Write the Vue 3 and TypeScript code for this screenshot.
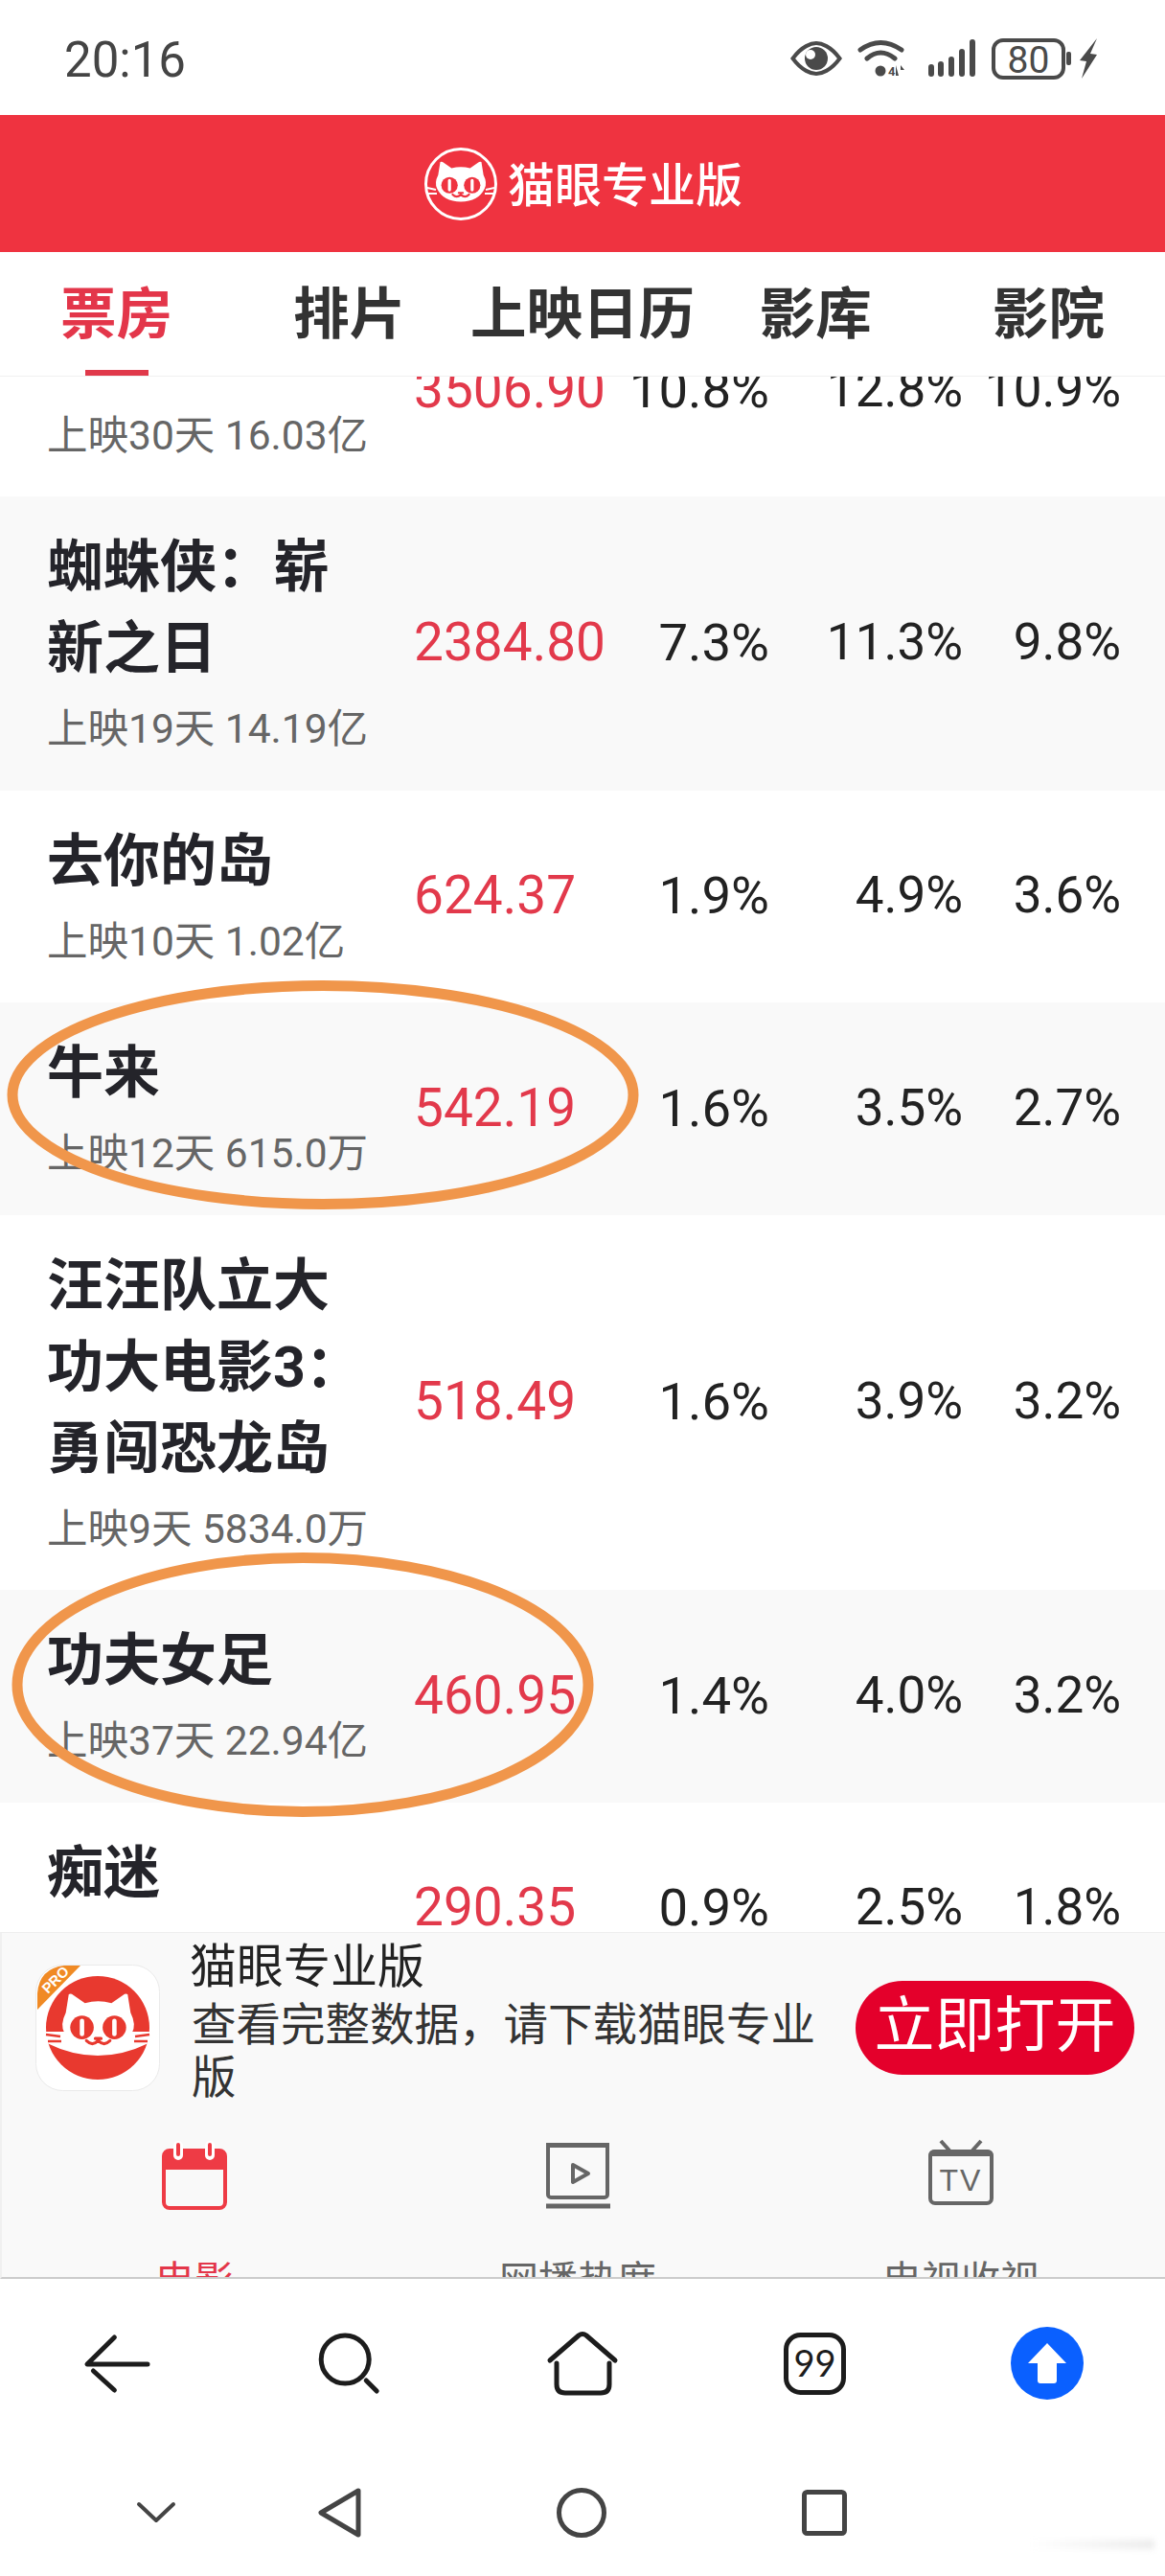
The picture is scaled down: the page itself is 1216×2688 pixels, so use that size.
<template>
  <div class="page">
    <svg class="defs" width="0" height="0">
      <symbol id="cat" viewBox="-4 0 108 84">
        <path fill="#fff" d="M10 3 Q13 1 16 4 L32 15 Q50 10 68 15 L84 4 Q87 1 90 3 Q93 22 94 28 Q102 44 96 55 Q84 80 50 80 Q16 80 4 55 Q-2 44 6 28 Q7 22 10 3Z" />
        <circle cx="28" cy="48" r="16" fill="currentColor" />
        <circle cx="72" cy="48" r="16" fill="currentColor" />
        <rect x="25" y="36" width="6" height="24" rx="3" fill="#fff" />
        <rect x="69" y="36" width="6" height="24" rx="3" fill="#fff" />
        <path fill="none" stroke="currentColor" stroke-width="4" stroke-linecap="round" d="M34 66 Q42 74 50 66 Q58 74 66 66 M46 63 H54" />
      </symbol>
    </svg>

    <div class="status">
      <span class="time">20:16</span>
      <div class="status-icons">
        <svg width="54" height="36" viewBox="0 0 54 36">
          <path fill="none" stroke="#4a4a4a" stroke-width="4" d="M2.500 18 C12 5 22 2 27 2 C32 2 42 5 51.500 18 C42 31 32 34 27 34 C22 34 12 31 2.500 18Z" />
          <circle cx="27" cy="18" r="12" fill="#4a4a4a" />
          <circle cx="21" cy="14" r="5" fill="#fff" />
        </svg>
        <svg class="ml16" width="50" height="40" viewBox="0 0 50 40">
          <path fill="none" stroke="#4a4a4a" stroke-width="5" stroke-linecap="round" d="M3 11 Q24 -4 46 11 M10 20 Q24 8 39 20" />
          <circle cx="24" cy="33" r="5.500" fill="#4a4a4a" />
          <text x="32" y="38" class="wifi-4">4</text>
          <path fill="#4a4a4a" d="M40 27 L43 38 H40Z M45 27 L49 32 H45Z" />
        </svg>
        <svg class="ml24" width="50" height="40" viewBox="0 0 50 40">
          <path fill="none" stroke="#4a4a4a" stroke-width="6" stroke-linecap="round" d="M3 29 V36 M13 26 V36 M24 21 V36 M35 13 V36 M46 3 V36" />
        </svg>
        <svg class="ml16" width="85" height="44" viewBox="0 0 85 44">
          <rect x="2" y="3" width="73" height="39" rx="10" fill="none" stroke="#4a4a4a" stroke-width="4" />
          <text x="38.500" y="37" text-anchor="middle" class="batt">80</text>
          <rect x="78" y="15" width="5" height="14" rx="2" fill="#4a4a4a" />
        </svg>
        <svg class="ml7" width="18" height="42" viewBox="0 0 18 42">
          <path fill="#4a4a4a" d="M18 0 L0 23 L7 24 L2 42 L18 17 L11 16Z" />
        </svg>
      </div>
    </div>

    <div class="header">
      <svg width="80" height="80" viewBox="0 0 80 80" color="#ef3340">
        <circle cx="40" cy="40" r="36.500" fill="none" stroke="#fff" stroke-width="3" />
        <use href="#cat" x="11" y="15" width="58" height="46" />
        <path fill="none" stroke="#fff" stroke-width="2" d="M5 44 L14 46 M6 50 L15 50 M75 44 L66 46 M74 50 L65 50" />
      </svg>
      <span class="header-text">猫眼专业版</span>
    </div>

    <div class="tabs">
      <div v-for="(t, i) in tabs" :key="t" class="tab" :class="{ on: i === 0 }">{{ t }}</div>
      <i class="tab-line"></i>
    </div>

    <div class="list">
      <div v-for="(m, i) in movies" :key="i" class="row">
        <div class="info">
          <div class="name">{{ m.name }}</div>
          <div class="sub">{{ m.sub }}</div>
        </div>
        <div class="box">{{ m.box }}</div>
        <div class="pct">{{ m.a }}</div>
        <div class="pct">{{ m.b }}</div>
        <div class="pct">{{ m.c }}</div>
      </div>
    </div>

    <div class="banner">
      <div class="app">
        <svg class="app-icon" width="130" height="132" viewBox="0 0 130 132" color="#e8392f">
          <rect x="0.500" y="0.500" width="129" height="131" rx="28" fill="#fff" stroke="#eaeaea" />
          <path fill="#f08a24" d="M2 30 Q4 4 30 1 H47 L2 47Z" />
          <text class="pro" transform="translate(13 31) rotate(-45)">PRO</text>
          <circle cx="65" cy="66" r="54" fill="currentColor" />
          <path fill="#fff" d="M10 70 L120 70 L118 82 Q65 108 12 82Z" />
          <use href="#cat" x="24" y="28" width="83" height="66" />
          <path fill="none" stroke="currentColor" stroke-width="2.500" d="M11 73 L26 75 M13 80 L27 80 M119 73 L104 75 M117 80 L103 80" />
        </svg>
        <div class="app-text">
          <div class="app-name">猫眼专业版</div>
          <div class="app-desc">{{ desc }}</div>
        </div>
        <div class="open-btn">立即打开</div>
      </div>
      <div class="nav">
        <div class="nav-item on">
          <svg width="80" height="80" viewBox="0 0 80 80">
            <rect x="8" y="14" width="64" height="60" rx="6" fill="none" stroke="#ee3b45" stroke-width="4" />
            <path fill="#ee3b45" d="M8 34 V18 Q8 13 14 13 H66 Q72 13 72 18 V34Z" />
            <path fill="none" stroke="#fff" stroke-width="10" stroke-linecap="round" d="M23 9 V19 M56 9 V19" />
            <path fill="none" stroke="#ee3b45" stroke-width="4" stroke-linecap="round" d="M23 8 V18 M56 8 V18" />
          </svg>
          <span>电影</span>
        </div>
        <div class="nav-item">
          <svg width="80" height="80" viewBox="0 0 80 80">
            <rect x="9" y="8" width="62" height="55" rx="3" fill="none" stroke="#666" stroke-width="4" />
            <path fill="#666" d="M7 6 H73 V11 H7Z" />
            <path fill="none" stroke="#666" stroke-width="4" stroke-linejoin="round" d="M35 29 L51 38 L35 47Z" />
            <path fill="none" stroke="#666" stroke-width="5" d="M7 72 H74" />
          </svg>
          <span>网播热度</span>
        </div>
        <div class="nav-item">
          <svg width="80" height="80" viewBox="0 0 80 80">
            <rect x="8" y="15" width="64" height="54" rx="5" fill="none" stroke="#666" stroke-width="4" />
            <path fill="#666" d="M6 20 Q6 13 13 13 H67 Q74 13 74 20Z" />
            <path fill="none" stroke="#666" stroke-width="4" d="M19 4 L28 14 M61 4 L52 14" />
            <text x="40" y="56" text-anchor="middle" class="tv">TV</text>
          </svg>
          <span>电视收视</span>
        </div>
      </div>
    </div>

    <div class="browser">
      <div class="tools">
        <svg width="80" height="80" viewBox="0 0 80 80">
          <path fill="none" stroke="#1c1c1c" stroke-width="5" stroke-linecap="round" stroke-linejoin="round" d="M37.400 13 L9 41 H72 M15.400 48 L37.400 68" />
        </svg>
        <svg width="80" height="80" viewBox="0 0 80 80">
          <circle cx="35.200" cy="36" r="25" fill="none" stroke="#1c1c1c" stroke-width="5" />
          <path fill="none" stroke="#1c1c1c" stroke-width="5" stroke-linecap="round" d="M57.200 58 L68.200 69" />
        </svg>
        <svg width="80" height="80" viewBox="0 0 80 80">
          <path fill="none" stroke="#1c1c1c" stroke-width="5" stroke-linecap="round" stroke-linejoin="round" d="M6 37 L36 11 Q40 8 44 11 L74 37" />
          <path fill="none" stroke="#1c1c1c" stroke-width="5" stroke-linecap="round" d="M13 40 V62 Q13 71 22 71 H59 Q68 71 68 62 V40" />
        </svg>
        <svg width="80" height="80" viewBox="0 0 80 80">
          <rect x="9.500" y="10.500" width="60" height="60" rx="15" fill="none" stroke="#1c1c1c" stroke-width="5" />
          <text x="39.500" y="54" text-anchor="middle" class="tabs-count">99</text>
        </svg>
        <svg width="80" height="80" viewBox="0 0 80 80">
          <circle cx="39" cy="40" r="38" fill="#0a60ff" />
          <path fill="#fff" d="M39 19 L59 40 H49 V58 Q49 61 46 61 H32 Q29 61 29 58 V40 H19Z" />
        </svg>
      </div>
      <div class="sysnav">
        <svg width="64" height="60" viewBox="0 0 64 60">
          <path fill="none" stroke="#444" stroke-width="4" stroke-linecap="round" stroke-linejoin="round" d="M14 21 L32 38 L50 21" />
        </svg>
        <svg width="64" height="60" viewBox="0 0 64 60">
          <path fill="none" stroke="#444" stroke-width="5" stroke-linejoin="round" d="M51 7 L12 30 L51 53Z" />
        </svg>
        <svg width="64" height="60" viewBox="0 0 64 60">
          <circle cx="32" cy="30" r="23.500" fill="none" stroke="#444" stroke-width="5" />
        </svg>
        <svg width="64" height="60" viewBox="0 0 64 60">
          <rect x="11.500" y="8.500" width="42" height="43" rx="3" fill="none" stroke="#444" stroke-width="5" />
        </svg>
      </div>
      <i class="smudge"></i>
    </div>

    <svg class="marks" width="1216" height="2688" viewBox="0 0 1216 2688">
      <ellipse cx="337" cy="1142.500" rx="324" ry="114" />
      <ellipse cx="316" cy="1758" rx="298" ry="132.500" />
    </svg>
  </div>
</template>

<script setup lang="ts">
interface Movie {
  name: string
  sub: string
  box: string
  a: string
  b: string
  c: string
}

const tabs = ['票房', '排片', '上映日历', '影库', '影院']

const desc = '查看完整数据\uFF0C请下载猫眼专业版'

const movies: Movie[] = [
  { name: '热片', sub: '上映30天 16.03亿', box: '3506.90', a: '10.8%', b: '12.8%', c: '10.9%' },
  { name: '蜘蛛侠\uFF1A崭新之日', sub: '上映19天 14.19亿', box: '2384.80', a: '7.3%', b: '11.3%', c: '9.8%' },
  { name: '去你的岛', sub: '上映10天 1.02亿', box: '624.37', a: '1.9%', b: '4.9%', c: '3.6%' },
  { name: '牛来', sub: '上映12天 615.0万', box: '542.19', a: '1.6%', b: '3.5%', c: '2.7%' },
  { name: '汪汪队立大功大电影3\uFF1A勇闯恐龙岛', sub: '上映9天 5834.0万', box: '518.49', a: '1.6%', b: '3.9%', c: '3.2%' },
  { name: '功夫女足', sub: '上映37天 22.94亿', box: '460.95', a: '1.4%', b: '4.0%', c: '3.2%' },
  { name: '痴迷', sub: '上映5天 1200.0万', box: '290.35', a: '0.9%', b: '2.5%', c: '1.8%' },
]
</script>

<style>
html,
body {
  margin: 0;
  background: #fff;
}
</style>

<style scoped>
.page {
  position: relative;
  width: 1216px;
  height: 2688px;
  display: flex;
  flex-direction: column;
  overflow: hidden;
  background: #fff;
  font-family: Roboto, "Noto Sans CJK SC", sans-serif;
}

.defs {
  position: absolute;
}

.status {
  height: 120px;
  flex: none;
  display: flex;
  align-items: center;
  justify-content: space-between;
  box-sizing: border-box;
  padding: 4px 71px 0 67px;
}

.time {
  font-size: 51px;
  color: #444;
}

.status-icons {
  display: flex;
  align-items: center;
  margin-top: -2px;
}

.ml7 {
  margin-left: 7px;
}

.ml16 {
  margin-left: 16px;
}

.ml24 {
  margin-left: 24px;
}

.wifi-4 {
  font-size: 13px;
  font-weight: 700;
  fill: #4a4a4a;
}

.batt {
  font-size: 39px;
  fill: #4a4a4a;
}

.header {
  height: 143px;
  flex: none;
  background: #ef3340;
  display: flex;
  align-items: center;
  justify-content: center;
  gap: 9px;
}

.header-text {
  font-size: 49px;
  font-weight: 500;
  color: #fff;
  margin-top: -4px;
}

.tabs {
  position: relative;
  z-index: 1;
  height: 130px;
  flex: none;
  display: flex;
  box-sizing: border-box;
  padding-bottom: 11px;
  background: #fff;
  border-bottom: 1px solid #f0f0f0;
}

.tab {
  flex: 1;
  display: flex;
  align-items: center;
  justify-content: center;
  font-size: 58.500px;
  font-weight: 700;
  color: #333;
  white-space: nowrap;
}

.tab.on {
  color: #e3364a;
}

.tab-line {
  position: absolute;
  left: 89px;
  bottom: 0;
  width: 66px;
  height: 6px;
  background: #e0394a;
}

.list {
  flex: 1;
  min-height: 0;
  overflow: hidden;
}

.row {
  display: grid;
  grid-template-columns: 382px 210px 161px 202px 165px;
  align-items: center;
  padding: 0 46px 0 50px;
}

.row:first-child {
  margin-top: -96.500px;
}

.row:first-child .name {
  margin: -5px 0 5px;
}

.row:nth-child(even) {
  background: #f9f9f9;
}

.info {
  margin-left: -1px;
  padding: 31px 0 22.500px;
}

.name {
  width: 345px;
  font-size: 59px;
  line-height: 85px;
  font-weight: 700;
  color: #24242a;
}

.sub {
  font-size: 42.500px;
  line-height: 83px;
  color: #666;
  white-space: nowrap;
}

.box {
  font-size: 55px;
  color: #e2394b;
  margin-top: -2px;
}

.pct {
  font-size: 53px;
  color: #222;
  text-align: right;
  margin-top: -2px;
}

.box + .pct {
  font-size: 54.500px;
}

.banner {
  position: relative;
  height: 362px;
  flex: none;
  box-sizing: border-box;
  overflow: hidden;
  background: #f9f9f9;
  border-top: 1px solid #eee;
  border-left: 2px solid #f0f0f0;
  border-bottom: 2px solid #ccc;
}

.app {
  display: flex;
  align-items: flex-start;
  padding: 8px 32px 0 35px;
  height: 172px;
}

.app-icon {
  flex: none;
  margin-top: 25px;
}

.app-text {
  width: 672px;
  margin-left: 33px;
  flex: none;
}

.app-name {
  font-size: 49px;
  line-height: 56px;
  color: #222;
  margin-left: -2px;
}

.app-desc {
  font-size: 46.500px;
  line-height: 55px;
  color: #333;
  margin-top: 5px;
}

.open-btn {
  margin: 42px 0 0 auto;
  width: 291px;
  height: 98px;
  border-radius: 49px;
  background: #e4002b;
  color: #fff;
  font-size: 63px;
  line-height: 94px;
  text-align: center;
  white-space: nowrap;
}

.nav {
  display: grid;
  grid-template-columns: repeat(3, 400px);
  padding: 33px 0 0 1px;
}

.nav-item {
  display: flex;
  flex-direction: column;
  align-items: center;
  gap: 42px;
  font-size: 41px;
  line-height: 56px;
  color: #666;
}

.nav-item.on {
  color: #e3364a;
}

.browser {
  position: relative;
  height: 310px;
  flex: none;
  background: #fff;
}

.tools {
  height: 176px;
  display: grid;
  grid-template-columns: repeat(5, 1fr);
  align-items: center;
  justify-items: center;
}

.tabs-count {
  font-family: Lato, sans-serif;
  font-size: 38px;
  fill: #1c1c1c;
}

.sysnav {
  display: grid;
  grid-template-columns: 192px 252px 253px 64px;
  padding: 38px 0 0 131px;
}

.smudge {
  position: absolute;
  left: 1075px;
  top: 272px;
  width: 130px;
  height: 10px;
  background: linear-gradient(90deg, #fff, #ececec);
  filter: blur(3px);
}

.tv {
  font-family: "Liberation Sans", sans-serif;
  font-size: 32px;
  letter-spacing: 2px;
  fill: #666;
}

.pro {
  font-family: "Liberation Sans", sans-serif;
  font-size: 15px;
  font-weight: 700;
  fill: #fff;
}

.marks {
  position: absolute;
  left: 0;
  top: 0;
  pointer-events: none;
}

.marks ellipse {
  fill: none;
  stroke: #f0964b;
  stroke-width: 11;
}
</style>
